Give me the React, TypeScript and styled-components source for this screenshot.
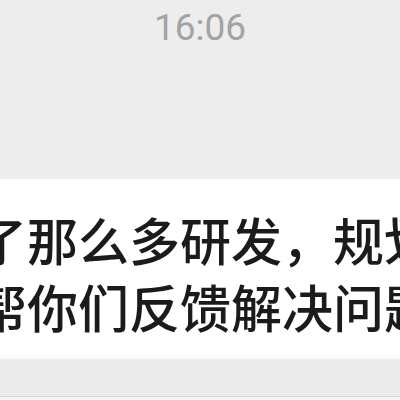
import React from 'react';
import styled, { createGlobalStyle } from 'styled-components';

const GlobalStyle = createGlobalStyle`
	html, body {
		margin: 0;
		padding: 0;
		background: #ededed;
	}
	body {
		width: 400px;
		height: 400px;
		overflow: hidden;
	}
`;

const Screen = styled.div`
	width: 400px;
	height: 400px;
	display: flex;
	flex-direction: column;
	background: #ededed;
	overflow: hidden;
`;

const TimeStamp = styled.div`
	padding-top: 6px;
	height: 179px;
	flex-shrink: 0;
	box-sizing: border-box;
	text-align: center;
	font-family: Roboto, 'Noto Sans', sans-serif;
	font-size: 37px;
	line-height: 44px;
	color: #a3a3a3;
`;

const Bubble = styled.div`
	height: 180px;
	flex-shrink: 0;
	box-sizing: border-box;
	margin: 0 -80px 0 -48px;
	padding: 27px 0 0 24px;
	background: #fff;
	border-bottom: 4px solid #fafafa;
	font-family: 'Noto Sans CJK SC', sans-serif;
	font-weight: 500;
	font-size: 51px;
	line-height: 67px;
	color: #1b1b1b;
	white-space: nowrap;
	overflow: hidden;
`;

const Line = styled.div`
	display: block;
`;

const Gap = styled.div`
	flex: 1;
	background: #ebebeb;
`;

const InputBar = styled.div`
	height: 3px;
	flex-shrink: 0;
	border-top: 1px solid #d4d4d4;
	background: #f5f5f5;
`;

const lines = ['了那么多研发，规划', '帮你们反馈解决问题'];

const App: React.FC = () => (
	<Screen>
		<GlobalStyle />
		<TimeStamp>16:06</TimeStamp>
		<Bubble>
			{lines.map((text) => (
				<Line key={text}>{text}</Line>
			))}
		</Bubble>
		<Gap />
		<InputBar />
	</Screen>
);

export default App;
